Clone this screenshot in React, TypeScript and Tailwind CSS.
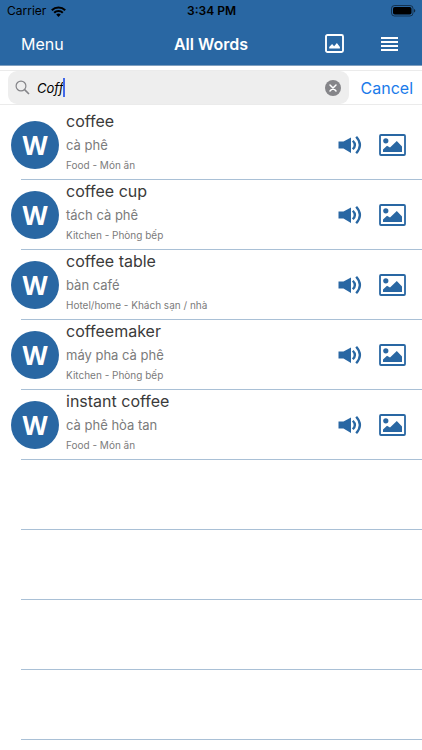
import { useState } from 'react'

interface Word {
  id: number
  term: string
  translation: string
  category: string
}

const WORDS: Word[] = [
  { id: 1, term: 'coffee', translation: 'cà phê', category: 'Food - Món ăn' },
  { id: 2, term: 'coffee cup', translation: 'tách cà phê', category: 'Kitchen - Phòng bếp' },
  { id: 3, term: 'coffee table', translation: 'bàn café', category: 'Hotel/home - Khách sạn / nhà' },
  { id: 4, term: 'coffeemaker', translation: 'máy pha cà phê', category: 'Kitchen - Phòng bếp' },
  { id: 5, term: 'instant coffee', translation: 'cà phê hòa tan', category: 'Food - Món ăn' },
]

// the table keeps drawing separators below the last result
const MIN_ROWS = 9

function StatusBar() {
  return (
    <div className="grid h-[22px] grid-cols-3 items-center pl-[7px] pr-[6px] text-black">
      <div className="flex items-center gap-[5px]">
        <span className="text-[12px] leading-4">Carrier</span>
        <svg className="h-[11px] w-[15px]" viewBox="0 0 15 11" fill="none" stroke="currentColor" strokeWidth="2.1">
          <path d="M.8 4.2a9.6 9.6 0 0 1 13.4 0" />
          <path d="M3.2 6.8a6.1 6.1 0 0 1 8.6 0" />
          <path d="M7.5 11 5.2 8.6a3.3 3.3 0 0 1 4.6 0Z" fill="currentColor" stroke="none" />
        </svg>
      </div>
      <span className="text-center text-[12px] font-semibold leading-4">3:34 PM</span>
      <svg className="h-[12px] w-[25px] justify-self-end" viewBox="0 0 25 12">
        <rect x=".5" y=".5" width="21.5" height="10.5" rx="3" fill="none" stroke="#000" strokeOpacity=".5" />
        <rect x="2" y="2" width="18.5" height="7.5" rx="1.8" fill="#000" />
        <path d="M23 4v3.6c.8-.3 1.3-1 1.3-1.8S23.8 4.3 23 4Z" fill="#000" fillOpacity=".6" />
      </svg>
    </div>
  )
}

function WordRow({ word }: { word: Word }) {
  return (
    <div className="flex h-[69px] items-center">
      <span className="ml-[11px] flex h-12 w-12 shrink-0 items-center justify-center rounded-full bg-[#2967a3] font-[family-name:'Open_Sans',sans-serif] text-[26px] font-bold leading-8 text-white">
        W
      </span>
      <div className="ml-[7px] min-w-0 flex-1 pb-2">
        <p className="text-[16px] leading-6 text-[#3a3a3a]">{word.term}</p>
        <p className="text-[13px] leading-6 text-[#7b7b7b]">{word.translation}</p>
        <p className="text-[10px] leading-4 text-[#7b7b7b]">{word.category}</p>
      </div>
      <button type="button" aria-label={`Listen to ${word.term}`} className="text-[#2967a3]">
        <svg className="h-5 w-6" viewBox="0 0 24 20" fill="currentColor">
          <path d="M.5 6.5h5L13 2.5v15.500l-7.500-4.500h-5Z" />
          <path d="M14.800 5.800q4.200 4.200 0 8.400M18.200 1.800q7.400 8.200 0 16.400" fill="none" stroke="currentColor" strokeWidth="2.3" />
        </svg>
      </button>
      <button type="button" aria-label={`Picture of ${word.term}`} className="ml-[17px] mr-4 text-[#2967a3]">
        <svg className="h-[22px] w-[27px]" viewBox="0 0 27 22" fill="currentColor">
          <rect x="1" y="1" width="25" height="20" rx="1" fill="none" stroke="currentColor" strokeWidth="1.8" />
          <circle cx="6.8" cy="6.8" r="2.6" />
          <path d="M4 18v-2.500l4-3.700 3 1.800L17.800 7l5.200 5.400V18Z" />
        </svg>
      </button>
    </div>
  )
}

export default function App() {
  const [query, setQuery] = useState('Coff')

  const results = WORDS.filter(w => w.term.includes(query.toLowerCase()))
  const emptyRows = Math.max(0, MIN_ROWS - results.length)

  return (
    <div className="min-h-screen overflow-x-hidden bg-white font-[family-name:Inter,sans-serif]">
      <header className="border-b border-[#7f9fbf] bg-[#2967a3]">
        <StatusBar />
        <nav className="grid h-[43px] grid-cols-[1fr_auto_1fr] items-center text-white">
          <button type="button" className="justify-self-start pl-[21px] text-[16px] leading-6">Menu</button>
          <h1 className="text-[16px] font-semibold leading-6">All Words</h1>
          <div className="flex items-center gap-[37px] justify-self-end pr-6">
            <button type="button" aria-label="Show pictures">
              <svg className="h-[19px] w-[19px]" viewBox="0 0 19 19" fill="none">
                <rect x="1" y="1" width="17" height="17" rx="1.5" stroke="currentColor" strokeWidth="1.9" />
                <path d="M4.200 14.500v-1.400l2.900-3 2 2.200 2.800-3.200 3 3.800v1.600Z" fill="currentColor" />
              </svg>
            </button>
            <button type="button" aria-label="List options">
              <svg className="h-4 w-[17px]" viewBox="0 0 17 16" stroke="currentColor" strokeWidth="2">
                <path d="M0 2h17M0 6h17M0 10h17M0 14h17" />
              </svg>
            </button>
          </div>
        </nav>
      </header>

      <form role="search" className="mt-1 flex h-[35px] items-center border-y border-[#ebebeb]" onSubmit={e => e.preventDefault()}>
        <div className="ml-2 flex h-[33px] flex-1 items-center rounded-[9px] bg-[#eeeeee] pl-[7px] pr-2">
          <svg className="h-[15px] w-[15px]" viewBox="0 0 15 15" fill="none" stroke="#858589" strokeWidth="1.2">
            <circle cx="6" cy="6" r="4.9" />
            <path d="m9.6 9.6 4.4 4.4" strokeWidth="1.6" />
          </svg>
          <input
            type="text"
            aria-label="Search words"
            autoComplete="off"
            value={query}
            onChange={e => setQuery(e.target.value)}
            className="field-sizing-content ml-[7px] bg-transparent text-[13px] italic leading-5 text-black caret-transparent outline-none"
          />
          <span className="h-[19px] w-[2px] bg-[#4268e8]" />
          <button type="button" aria-label="Clear search" className="ml-auto" onClick={() => setQuery('')}>
            <svg className="h-4 w-4" viewBox="0 0 16 16">
              <circle cx="8" cy="8" r="8" fill="#858589" />
              <path d="m5 5 6 6m0-6-6 6" stroke="#fff" strokeWidth="1.5" strokeLinecap="round" />
            </svg>
          </button>
        </div>
        <button type="button" className="ml-3 mr-[9px] text-[16px] leading-6 text-[#1a7bea]" onClick={() => setQuery('')}>Cancel</button>
      </form>

      <ul className="pt-[5px]">
        {results.map(w => (
          <li key={w.id}>
            <WordRow word={w} />
            <div className="ml-[21px] h-px bg-[#a9c0d6]" />
          </li>
        ))}
        {Array.from({ length: emptyRows }, (_, i) => (
          <li key={`empty-${i}`} aria-hidden="true">
            <div className="h-[69px]" />
            <div className="ml-[21px] h-px bg-[#a9c0d6]" />
          </li>
        ))}
      </ul>
    </div>
  )
}
